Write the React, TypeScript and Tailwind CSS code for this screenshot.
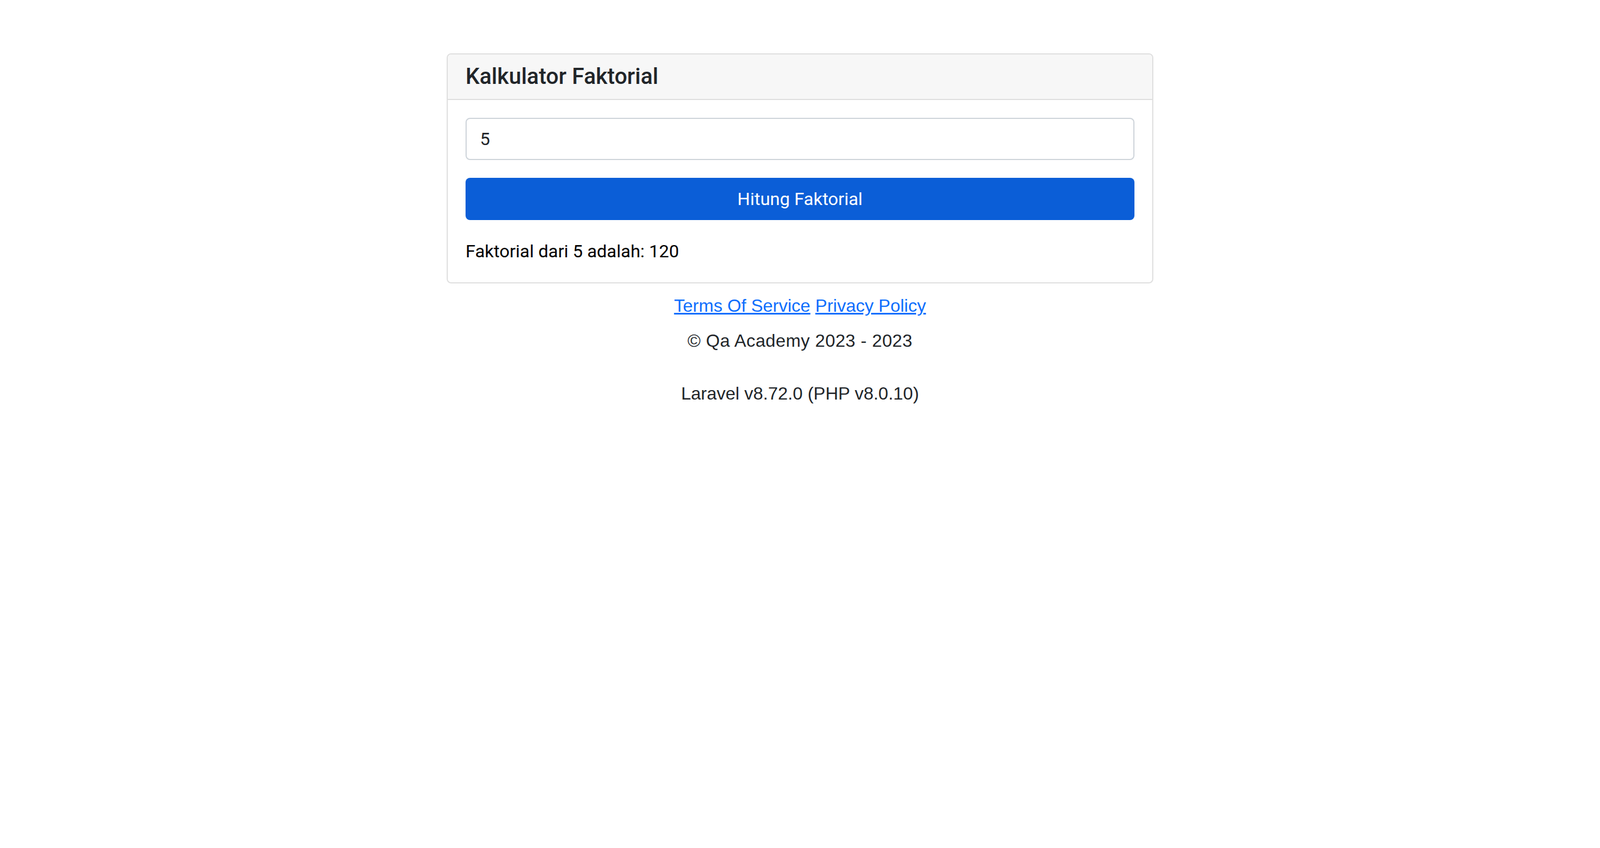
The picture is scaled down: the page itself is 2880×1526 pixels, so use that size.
export default function App() {
  return (
    <div className="min-h-[1526px] bg-white text-[#212529]">
      <div className="mx-auto w-[1272px] pt-[96px]">
        <div
          className="overflow-hidden rounded-[8px] border-2 border-[#dfdfdf] bg-white"
          style={{ fontFamily: 'Roboto, "Noto Sans", sans-serif' }}
        >
          <div className="border-b-2 border-[#dfdfdf] bg-[#f7f7f7] px-[32px] py-[16px]">
            <h5 className="m-0 text-[40px] font-medium leading-[48px] text-[#212529]">Kalkulator Faktorial</h5>
          </div>
          <div className="p-[32px]">
            <input
              type="number"
              defaultValue="5"
              className="block h-[76px] w-full rounded-[8px] border-2 border-[#ced4da] bg-white px-[24px] text-[32px] leading-[48px] text-[#212529] outline-none"
            />
            <button className="mt-[32px] block h-[76px] w-full rounded-[8px] bg-[#0b5ed7] text-[32px] leading-[48px] text-white">
              Hitung Faktorial
            </button>
            <div className="mt-[32px] text-[32px] leading-[48px] text-black">Faktorial dari 5 adalah: 120</div>
          </div>
        </div>
        <div
          className="text-center text-[32px] leading-[48px] text-[#212529]"
          style={{ fontFamily: '"Liberation Sans", Arial, sans-serif' }}
        >
          <div className="mt-[16px]">
            <a href="#" className="text-[#0d6efd] underline">Terms Of Service</a>{' '}
            <a href="#" className="text-[#0d6efd] underline">Privacy Policy</a>
          </div>
          <p className="mt-[15px] tracking-[0.4px]">© Qa Academy 2023 - 2023</p>
          <p className="mt-[47px]">Laravel v8.72.0 (PHP v8.0.10)</p>
        </div>
      </div>
    </div>
  );
}
